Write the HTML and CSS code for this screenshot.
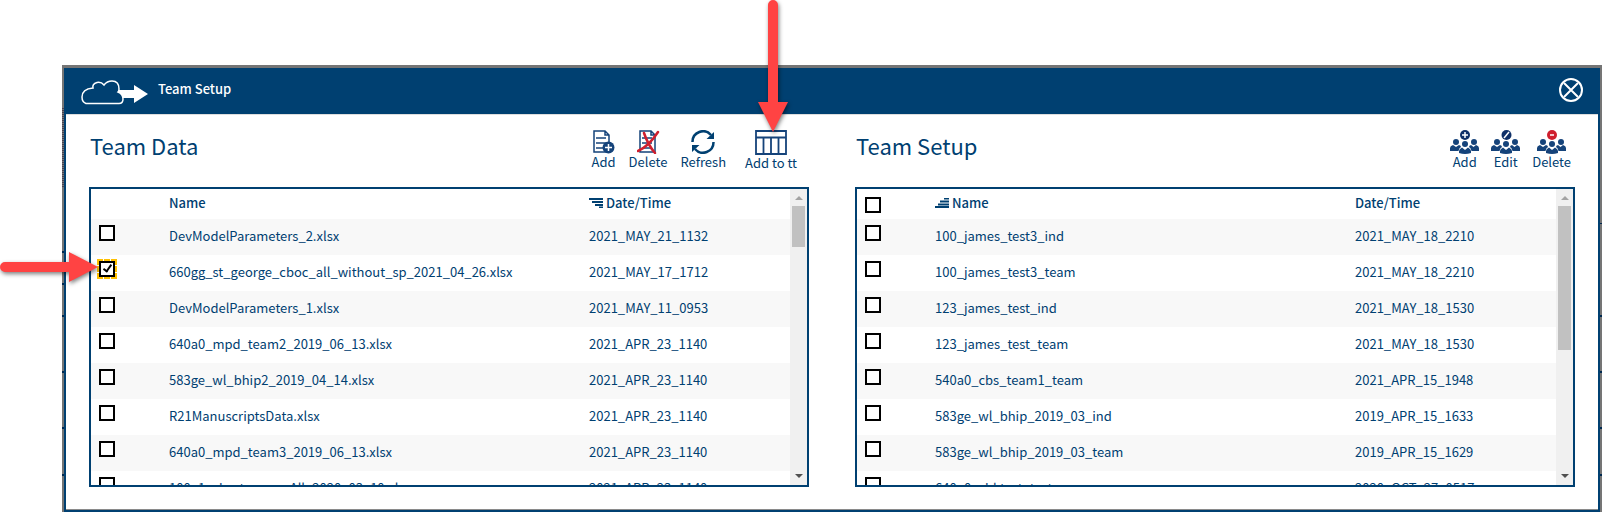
FILE: index.html
```html
<!DOCTYPE html>
<html lang="en">
<head>
<meta charset="utf-8">
<title>Team Setup</title>
<link rel="stylesheet" href="styles.css">
</head>
<body>
<svg class="defs" aria-hidden="true">
  <symbol id="people" viewBox="0 0 29 16">
    <g fill="#15437a">
      <circle cx="6" cy="3" r="3"/><circle cx="24" cy="3" r="3"/><circle cx="15" cy="5" r="3"/>
      <path d="M0 12V9q0-2 3-3l3 2 3-2q2 .5 2 2-2 1-2.500 4zM29 12V9q0-2-3-3l-2.500 2L21 6q-2 .5-2 2 2 1 2.500 4z"/>
      <path d="M9 14v-2q0-2 3-3.500l3 2.500 3-2.500q3 1.500 3 3.500v2q-6 2-12 0z"/>
    </g>
  </symbol>
  <symbol id="doc" viewBox="0 0 17 24">
    <path d="M1 1h11l4 4v17H1zM12 1v4h4" fill="#fff" stroke="#15437a" stroke-width="1.500"/>
    <path d="M3 8h10M3 13h10M3 18h10" stroke="#15437a" stroke-width="1.500"/>
  </symbol>
</svg>
<main class="dialog">
  <header class="titlebar">
    <svg class="logo" viewBox="0 0 67 25" aria-hidden="true">
      <path d="M37 10h16V5l14 9-14 9v-5H37z" fill="#fff"/>
      <path d="M5 23.500Q1 22 1 17Q1 9 12 8Q11 4 16 2.500Q20 1.500 23 5Q26 1 31 1Q38 1 38 9Q38 11 37 12Q42 14 42 19Q42 23.500 38 23.500Z" fill="#004071" stroke="#fff" stroke-width="1.500"/>
    </svg>
    <h1 class="heading">Team Setup</h1>
    <button class="close" aria-label="Close">
      <svg viewBox="0 0 24 24"><circle cx="12" cy="12" r="11" fill="none" stroke="#fff" stroke-width="2"/><path d="M5 5l14 14M19 5L5 19" stroke="#fff" stroke-width="2"/></svg>
    </button>
  </header>
  <div class="panels">
    <section class="panel">
      <div class="panel-top">
        <h2 class="panel-title">Team Data</h2>
        <div class="tools tools-data">
          <button class="tool"><svg width="22" height="24" viewBox="0 0 22 24"><use href="#doc" width="17" height="24"/><circle cx="15.500" cy="17.500" r="6" fill="#15437a"/><path d="M12 17.500h7M15.500 14v7" stroke="#fff" stroke-width="1.500"/></svg>Add</button>
          <button class="tool"><svg width="23" height="24" viewBox="0 0 23 24"><use href="#doc" x="2" width="17" height="24"/><path d="M1 21Q12 16 21 2M7 3q4 12 11 20" fill="none" stroke="#cf1f2e" stroke-width="2.500" stroke-linecap="round"/></svg>Delete</button>
          <button class="tool"><svg width="24" height="24" viewBox="0 0 24 24"><path d="M1.500 12A10.500 10.500 0 0 1 20 5M22.500 12A10.500 10.500 0 0 1 4 19" fill="none" stroke="#004071" stroke-width="2.500"/><path d="M23 2v7h-7.500zM1 22v-7h7.500z" fill="#004071"/></svg>Refresh</button>
          <button class="tool"><svg width="32" height="25" viewBox="0 0 32 25"><path d="M1 1h30v23H1zM1 7.500h30M8.500 7.500V24M16 7.500V24M23.500 7.500V24" fill="none" stroke="#15437a" stroke-width="1.800"/></svg>Add to tt</button>
        </div>
      </div>
      <div class="listbox">
        <table class="list">
          <colgroup><col class="c-check"><col class="c-name"><col class="c-date"></colgroup>
          <thead><tr><td></td><th>Name</th><th><svg class="sort" viewBox="0 0 14 10"><path d="M0 1h14M3 4h11M6 7h8M10 9.500h4" stroke="#004071" stroke-width="1.800"/></svg>Date/Time</th></tr></thead>
          <tbody>
            <tr><td><input type="checkbox" aria-label="DevModelParameters_2.xlsx"></td><td>DevModelParameters_2.xlsx</td><td>2021_MAY_21_1132</td></tr>
            <tr><td><input type="checkbox" class="focused" checked aria-label="660gg_st_george_cboc_all_without_sp_2021_04_26.xlsx"></td><td>660gg_st_george_cboc_all_without_sp_2021_04_26.xlsx</td><td>2021_MAY_17_1712</td></tr>
            <tr><td><input type="checkbox" aria-label="DevModelParameters_1.xlsx"></td><td>DevModelParameters_1.xlsx</td><td>2021_MAY_11_0953</td></tr>
            <tr><td><input type="checkbox" aria-label="640a0_mpd_team2_2019_06_13.xlsx"></td><td>640a0_mpd_team2_2019_06_13.xlsx</td><td>2021_APR_23_1140</td></tr>
            <tr><td><input type="checkbox" aria-label="583ge_wl_bhip2_2019_04_14.xlsx"></td><td>583ge_wl_bhip2_2019_04_14.xlsx</td><td>2021_APR_23_1140</td></tr>
            <tr><td><input type="checkbox" aria-label="R21ManuscriptsData.xlsx"></td><td>R21ManuscriptsData.xlsx</td><td>2021_APR_23_1140</td></tr>
            <tr><td><input type="checkbox" aria-label="640a0_mpd_team3_2019_06_13.xlsx"></td><td>640a0_mpd_team3_2019_06_13.xlsx</td><td>2021_APR_23_1140</td></tr>
            <tr><td><input type="checkbox" aria-label="100_1_cbcsturems_All_2020_03_10.xlsx"></td><td>100_1_cbcsturems_All_2020_03_10.xlsx</td><td>2021_APR_23_1140</td></tr>
          </tbody>
        </table>
        <div class="scroll"><span class="up"></span><span class="thumb thumb-short"></span><span class="down"></span></div>
      </div>
    </section>
    <section class="panel">
      <div class="panel-top">
        <h2 class="panel-title">Team Setup</h2>
        <div class="tools tools-setup">
          <button class="tool"><svg width="29" height="24" viewBox="0 0 29 24"><use href="#people" y="9" width="29" height="16"/><circle cx="15" cy="5" r="5" fill="#0f3068"/><path d="M12 5h6M15 2v6" stroke="#fff" stroke-width="1.500"/></svg>Add</button>
          <button class="tool"><svg width="29" height="24" viewBox="0 0 29 24"><use href="#people" y="9" width="29" height="16"/><circle cx="15.500" cy="5" r="5" fill="#0f3068"/><path d="M13 8l5-6" stroke="#fff" stroke-width="1.500"/></svg>Edit</button>
          <button class="tool"><svg width="29" height="24" viewBox="0 0 29 24"><use href="#people" y="9" width="29" height="16"/><circle cx="15" cy="5" r="5" fill="#cf1f2e"/><path d="M13 5h4" stroke="#fff" stroke-width="1.500"/></svg>Delete</button>
        </div>
      </div>
      <div class="listbox">
        <table class="list">
          <colgroup><col class="c-check"><col class="c-name"><col class="c-date"></colgroup>
          <thead><tr><td><input type="checkbox" aria-label="Select all"></td><th><svg class="sort" viewBox="0 0 14 10"><path d="M9 .5h5M5 3.500h9M3 6.500h11M0 9h14" stroke="#004071" stroke-width="1.800"/></svg>Name</th><th>Date/Time</th></tr></thead>
          <tbody>
            <tr><td><input type="checkbox" aria-label="100_james_test3_ind"></td><td>100_james_test3_ind</td><td>2021_MAY_18_2210</td></tr>
            <tr><td><input type="checkbox" aria-label="100_james_test3_team"></td><td>100_james_test3_team</td><td>2021_MAY_18_2210</td></tr>
            <tr><td><input type="checkbox" aria-label="123_james_test_ind"></td><td>123_james_test_ind</td><td>2021_MAY_18_1530</td></tr>
            <tr><td><input type="checkbox" aria-label="123_james_test_team"></td><td>123_james_test_team</td><td>2021_MAY_18_1530</td></tr>
            <tr><td><input type="checkbox" aria-label="540a0_cbs_team1_team"></td><td>540a0_cbs_team1_team</td><td>2021_APR_15_1948</td></tr>
            <tr><td><input type="checkbox" aria-label="583ge_wl_bhip_2019_03_ind"></td><td>583ge_wl_bhip_2019_03_ind</td><td>2019_APR_15_1633</td></tr>
            <tr><td><input type="checkbox" aria-label="583ge_wl_bhip_2019_03_team"></td><td>583ge_wl_bhip_2019_03_team</td><td>2019_APR_15_1629</td></tr>
            <tr><td><input type="checkbox" aria-label="640a0_cbktest_test"></td><td>640a0_cbktest_test</td><td>2020_OCT_27_0517</td></tr>
          </tbody>
        </table>
        <div class="scroll"><span class="up"></span><span class="thumb thumb-long"></span><span class="down"></span></div>
      </div>
    </section>
  </div>
</main>
<svg class="arrow arrow-down" width="40" height="140" viewBox="0 0 40 140" aria-hidden="true"><path d="M15 5a5 5 0 0 1 10 0v97h10L20 132 5 102h10z" fill="#ff4343"/></svg>
<svg class="arrow arrow-right" width="106" height="40" viewBox="0 0 106 40" aria-hidden="true"><path d="M5 15a5 5 0 0 0 0 10h64v10L98 20 69 5v10z" fill="#ff4343"/></svg>
</body>
</html>
```

FILE: styles.css
```css
* { box-sizing: border-box; }

body {
  margin: 0;
  padding: 65px 0 0 62px;
  background: #fff;
  color: #004071;
  font: 13px/20px "Noto Sans CJK SC", "Noto Sans", sans-serif;
  overflow: hidden;
  position: relative;
}

.defs { position: absolute; width: 0; height: 0; }

/* The grey edge shows slivers of the dimmed grid behind the dialog. */
.dialog {
  padding: 3px 2px 0;
  background:
    linear-gradient(#00294f, #00294f) 0 186px / 2px 2px no-repeat,
    linear-gradient(#00294f, #00294f) 0 218px / 2px 2px no-repeat,
    linear-gradient(#00294f, #00294f) 0 250px / 100% 2px no-repeat,
    linear-gradient(#00294f, #00294f) 0 306px / 100% 2px no-repeat,
    linear-gradient(#00294f, #00294f) 0 362px / 100% 2px no-repeat,
    linear-gradient(#00294f, #00294f) 0 409px / 100% 2px no-repeat,
    linear-gradient(#00294f, #00294f) 100% 158px / 2px 1px no-repeat,
    repeating-linear-gradient(#4d4250 0 1px, #757575 1px 2px) 0 43px / 2px 80px no-repeat,
    #757575;
}

.titlebar {
  display: flex;
  align-items: center;
  height: 46px;
  padding: 0 17px;
  background: #004071;
  color: #fff;
}
.logo { width: 67px; height: 25px; margin-top: 2px; }
.heading { margin: 0 auto 4px 10px; font-size: 13px; line-height: 20px; font-weight: 500; }
.close { width: 24px; height: 24px; margin-bottom: 2px; padding: 0; border: 0; background: none; }
.close svg { display: block; }

.panels {
  display: grid;
  grid-template-columns: 1fr 1fr;
  border: solid #004071;
  border-width: 0 2px 2px;
  padding-bottom: 23px;
  background: #fff;
  box-shadow: inset 0 -1px #8a8a8a, inset 0 1px #ddd;
}
.panel { padding: 0 23px; }
.panel-top {
  display: flex;
  justify-content: space-between;
  align-items: flex-start;
  height: 73px;
  padding-top: 16px;
}
.panel-title { margin: 0; padding: 0 1px; font-size: 22px; line-height: 30px; font-weight: 400; }

.tools { display: flex; }
.tools-data { gap: 13px; padding-right: 12px; }
.tools-data .tool:last-child { margin-left: 6px; }
.tools-setup { gap: 12px; padding-right: 4px; }
.tool {
  display: flex;
  flex-direction: column;
  align-items: center;
  padding: 0;
  border: 0;
  background: none;
  color: inherit;
  font: inherit;
  line-height: 16px;
}
.tool svg { display: block; }

.listbox {
  display: flex;
  height: 300px;
  border: 2px solid #004071;
  overflow: hidden;
}
.list { flex: 1; table-layout: fixed; border-collapse: collapse; height: 318px; }
.c-check { width: 78px; }
.c-date { width: 201px; }
.list td, .list th { padding: 0 0 3px; text-align: left; white-space: nowrap; font-weight: 400; }
.list tr { height: 36px; }
.list thead tr { height: 30px; }
.list th { font-weight: 500; }
.list tbody tr:nth-child(odd) { background: #f8f8f8; }
.list td:first-child { vertical-align: top; padding: 6px 0 0 8px; }
.list thead td:first-child { padding-top: 8px; }

input[type="checkbox"] {
  appearance: none;
  display: block;
  width: 16px;
  height: 16px;
  margin: 0;
  border: 2px solid #000;
  background: #fff;
}
input[type="checkbox"]:checked::after {
  content: "";
  display: block;
  width: 3px;
  height: 7px;
  margin: 0 0 0 4px;
  border: solid #000;
  border-width: 0 2px 2px 0;
  transform: rotate(35deg);
}
input.focused { outline: 2px dashed #ffc000; }

.sort { width: 14px; height: 10px; margin-right: 3px; }

.scroll {
  display: flex;
  flex-direction: column;
  align-items: center;
  width: 17px;
  background: #f0f0f0;
}
.up, .down { border: 4px solid transparent; }
.up { margin: 3px 0 6px; border-bottom-color: #a3a3a3; }
.down { margin: auto 0 3px; border-top-color: #505050; }
.thumb { width: 13px; background: #c1c1c1; }
.thumb-short { height: 41px; }
.thumb-long { height: 144px; }

.arrow { position: absolute; filter: drop-shadow(1px 2px 2px rgba(0, 0, 0, 0.5)); }
.arrow-down { left: 753px; top: 0; }
.arrow-right { left: 0; top: 247px; }
```
